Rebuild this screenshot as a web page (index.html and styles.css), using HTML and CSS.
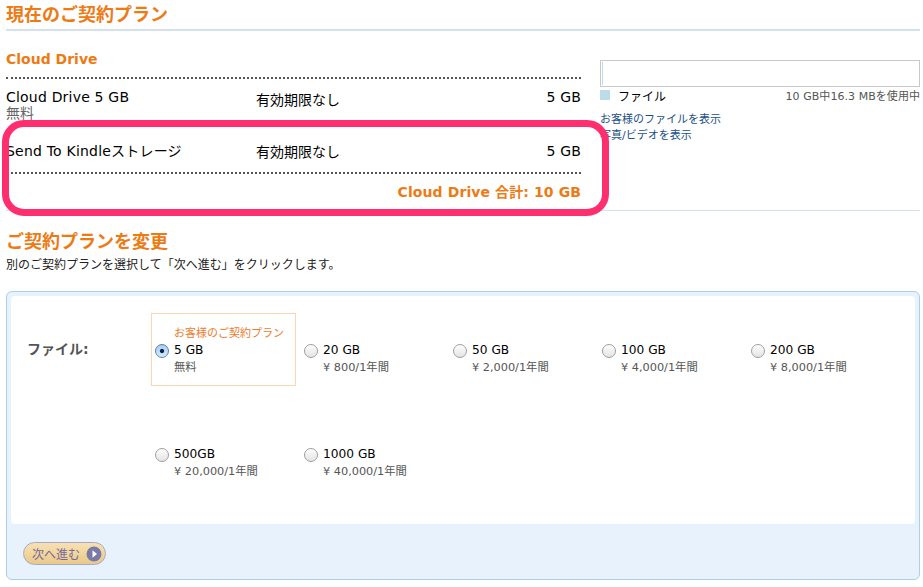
FILE: index.html
```html
<!DOCTYPE html>
<html lang="ja">
<head>
<meta charset="utf-8">
<title>ご契約プラン</title>
<link rel="stylesheet" href="styles.css">
</head>
<body>
<main class="page">
  <h1 class="heading heading--first">現在のご契約プラン</h1>
  <section class="current">
    <div class="usage-left">
      <h2 class="subheading">Cloud Drive</h2>
      <div class="row row--first">
        <div class="row-name">Cloud Drive 5 GB<small class="row-price">無料</small></div>
        <div class="row-term">有効期限なし</div>
        <div class="row-size">5 GB</div>
      </div>
      <div class="row row--second">
        <div class="row-name">Send To Kindleストレージ</div>
        <div class="row-term">有効期限なし</div>
        <div class="row-size">5 GB</div>
      </div>
      <div class="total">Cloud Drive 合計: 10 GB</div>
    </div>
    <aside class="usage">
      <div class="meter"><span class="meter-fill"></span></div>
      <div class="legend">
        <span class="legend-swatch"></span>
        <span class="legend-name">ファイル</span>
        <span class="legend-used">10 GB中16.3 MBを使用中</span>
      </div>
      <a class="usage-link usage-link--first" href="#">お客様のファイルを表示</a>
      <a class="usage-link" href="#">写真/ビデオを表示</a>
    </aside>
    <div class="highlight"></div>
  </section>
  <h1 class="heading heading--second">ご契約プランを変更</h1>
  <p class="intro">別のご契約プランを選択して「次へ進む」をクリックします。</p>
  <form class="panel">
    <div class="panel-body">
      <div class="panel-label">ファイル:</div>
      <div class="plans">
        <label class="plan plan--current">
          <input class="radio" type="radio" name="plan" checked>
          <span class="plan-text"><span class="plan-note">お客様のご契約プラン</span><span class="plan-size">5 GB</span><span class="plan-price">無料</span></span>
        </label>
        <label class="plan">
          <input class="radio" type="radio" name="plan">
          <span class="plan-text"><span class="plan-size">20 GB</span><span class="plan-price">¥ 800/1年間</span></span>
        </label>
        <label class="plan">
          <input class="radio" type="radio" name="plan">
          <span class="plan-text"><span class="plan-size">50 GB</span><span class="plan-price">¥ 2,000/1年間</span></span>
        </label>
        <label class="plan">
          <input class="radio" type="radio" name="plan">
          <span class="plan-text"><span class="plan-size">100 GB</span><span class="plan-price">¥ 4,000/1年間</span></span>
        </label>
        <label class="plan">
          <input class="radio" type="radio" name="plan">
          <span class="plan-text"><span class="plan-size">200 GB</span><span class="plan-price">¥ 8,000/1年間</span></span>
        </label>
        <label class="plan">
          <input class="radio" type="radio" name="plan">
          <span class="plan-text"><span class="plan-size">500GB</span><span class="plan-price">¥ 20,000/1年間</span></span>
        </label>
        <label class="plan">
          <input class="radio" type="radio" name="plan">
          <span class="plan-text"><span class="plan-size">1000 GB</span><span class="plan-price">¥ 40,000/1年間</span></span>
        </label>
      </div>
    </div>
    <div class="panel-foot">
      <button class="next" type="button">
        <span>次へ進む</span>
        <svg class="next-icon" width="16" height="16" viewBox="0 0 16 16" aria-hidden="true">
          <circle cx="8" cy="8" r="7.5" fill="#7a7aa6"/>
          <path d="M6.5 4.2 L11 8 L6.5 11.8 Z" fill="#fff"/>
        </svg>
      </button>
    </div>
  </form>
</main>
</body>
</html>
```
FILE: styles.css
```css
html, body { margin: 0; padding: 0; background: #fff; }
body {
  font-family: "DejaVu Sans", "Noto Sans CJK JP", sans-serif;
  color: #000;
  overflow: hidden;
}
.page {
  width: 914px;
  height: 587px;
  margin-left: 6px;
  position: relative;
}
.heading {
  margin: 0;
  font-size: 18px;
  line-height: 22px;
  font-weight: 700;
  color: #ee7a14;
}
.heading--first {
  padding-top: 4px;
  height: 25px;
  border-bottom: 2px solid #d5e1ee;
}
.current {
  display: flex;
  position: relative;
  height: 179px;
  border-bottom: 1px solid #d8e0ec;
}
.usage-left { width: 575px; }
.subheading {
  margin: 0;
  padding-top: 19px;
  height: 27px;
  font-size: 14px;
  line-height: 18px;
  font-weight: 700;
  color: #ee7a14;
}
.row {
  display: flex;
  font-size: 14px;
  line-height: 17px;
  box-sizing: border-box;
}
.row--first {
  height: 52px;
  border-top: 2px dotted #555;
  padding-top: 10px;
}
.row--second {
  height: 45px;
  border-bottom: 2px dotted #555;
  padding-top: 14px;
}
.row-name { width: 250px; letter-spacing: 0.2px; }
.row-price {
  display: block;
  font-size: 14px;
  line-height: 15px;
  letter-spacing: 0;
  color: #666;
}
.row-term { width: 250px; padding-top: 1px; }
.row--first .row-term { padding-top: 3px; }
.row-size { width: 75px; text-align: right; letter-spacing: 0.2px; }
.total {
  padding-top: 9px;
  text-align: right;
  font-size: 14px;
  line-height: 18px;
  letter-spacing: 0.1px;
  font-weight: 700;
  color: #ee7a14;
}
.usage {
  width: 320px;
  margin-left: 19px;
  padding-top: 29px;
}
.meter {
  height: 25px;
  border: 1px solid #c8c8c8;
  position: relative;
}
.meter-fill {
  display: block;
  width: 1px;
  height: 23px;
  margin: 1px 0 0 1px;
  background: #bcdcea;
}
.legend {
  display: flex;
  align-items: center;
  height: 16px;
}
.legend-swatch {
  width: 10px;
  height: 10px;
  margin-right: 8px;
  background: #bcdcea;
}
.legend-name { font-size: 12px; }
.legend-used {
  margin-left: auto;
  font-size: 11px;
  letter-spacing: 0.05px;
  color: #555;
}
.usage-link {
  display: block;
  font-size: 11px;
  line-height: 16px;
  color: #1c4f86;
  text-decoration: none;
}
.usage-link--first { margin-top: 9px; }
.highlight {
  position: absolute;
  left: -4px;
  top: 89px;
  width: 593px;
  height: 82px;
  border: 7px solid #ff2e6e;
  border-radius: 22px;
  pointer-events: none;
}
.heading--second { margin-top: 20px; }
.intro {
  margin: 4px 0 0;
  font-size: 12px;
  line-height: 16px;
  color: #222;
}
.panel {
  margin-top: 18px;
  height: 289px;
  box-sizing: border-box;
  border: 1px solid #a7d0ec;
  border-radius: 6px;
  background: #e8f2fc;
  padding: 4px;
}
.panel-body {
  display: flex;
  height: 228px;
  background: #fff;
  border-radius: 4px;
}
.panel-label {
  width: 140px;
  padding: 43px 0 0 16px;
  box-sizing: border-box;
  font-size: 14px;
  line-height: 20px;
  font-weight: 700;
  color: #555;
}
.plans {
  display: grid;
  grid-template-columns: repeat(5, 149px);
  grid-auto-rows: 104px;
  padding-top: 17px;
  align-items: start;
}
.plan {
  display: flex;
  padding: 28px 0 0 4px;
  box-sizing: border-box;
  cursor: pointer;
}
.plan--current {
  width: 145px;
  height: 73px;
  border: 1px solid #fbd6b4;
  padding: 12px 0 0 3px;
}
.radio {
  appearance: none;
  -webkit-appearance: none;
  flex: none;
  width: 14px;
  height: 14px;
  margin: 3px 5px 0 0;
  border: 1px solid #a0a0a0;
  border-radius: 50%;
  box-sizing: border-box;
  background: linear-gradient(#fdfdfd, #e4e4e4);
}
.plan--current .radio { margin-top: 18px; }
.radio:checked {
  border-color: #5a7fae;
  background: radial-gradient(circle, #10244a 0, #10244a 1.6px, rgba(16, 36, 74, 0) 2.6px), linear-gradient(#a8cdf2, #d5eafc);
}
.plan-text { display: block; }
.plan-note {
  display: block;
  font-size: 11px;
  line-height: 15px;
  color: #ee7a2c;
}
.plan-size {
  display: block;
  font-size: 12.2px;
  line-height: 18px;
}
.plan-price {
  display: block;
  font-size: 11.3px;
  line-height: 17px;
  color: #555;
}
.panel-foot { padding: 18px 0 0 12px; }
.next {
  display: flex;
  align-items: center;
  justify-content: space-between;
  width: 83px;
  height: 23px;
  padding: 0 3px 0 8px;
  box-sizing: border-box;
  border: 1px solid #a6abc4;
  border-radius: 12px;
  background: linear-gradient(#f6e0b4, #f3d79f 45%, #e9c88c);
  font-family: inherit;
  font-size: 12px;
  color: #77689a;
}
.next-icon { flex: none; }
```
